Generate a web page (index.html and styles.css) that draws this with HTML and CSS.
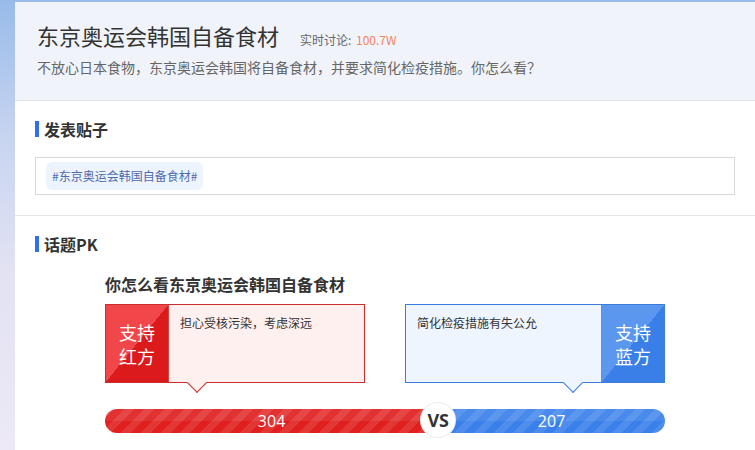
FILE: index.html
```html
<!DOCTYPE html>
<html lang="zh">
<head>
<meta charset="utf-8">
<link rel="stylesheet" href="styles.css">
</head>
<body>
<div class="page">
  <div class="container">
    <header class="topic-head">
      <div class="title-row">
        <h1 class="title">东京奥运会韩国自备食材</h1>
        <span class="live">实时讨论: <em class="live-num">100.7W</em></span>
      </div>
      <p class="subtitle">不放心日本食物，东京奥运会韩国将自备食材，并要求简化检疫措施。你怎么看？</p>
    </header>

    <section class="section">
      <h2 class="sec-title">发表贴子</h2>
      <div class="post-box">
        <span class="tag">#东京奥运会韩国自备食材#</span>
      </div>
    </section>

    <section class="section last">
      <h2 class="sec-title">话题PK</h2>
      <div class="pk">
        <h3 class="pk-q">你怎么看东京奥运会韩国自备食材</h3>
        <div class="pk-cards">
          <div class="card red">
            <div class="side"><span class="side-line">支持</span><span class="side-line">红方</span></div>
            <div class="opinion">担心受核污染，考虑深远</div>
            <span class="arrow"></span>
          </div>
          <div class="card blue">
            <div class="opinion">简化检疫措施有失公允</div>
            <div class="side"><span class="side-line">支持</span><span class="side-line">蓝方</span></div>
            <span class="arrow"></span>
          </div>
        </div>
        <div class="bar">
          <div class="seg seg-red" style="width:59.5%">304</div>
          <div class="seg seg-blue">207</div>
          <span class="vs" style="left:59.5%">VS</span>
        </div>
      </div>
    </section>
  </div>
</div>
</body>
</html>
```

FILE: styles.css
```css
html, body {
  margin: 0;
  padding: 0;
}
body {
  font-family: "Noto Sans CJK SC", "Noto Sans", sans-serif;
  background: linear-gradient(to bottom, #98bbea 0%, #c7d4f0 30%, #e2e2f3 60%, #ede9f6 100%);
  height: 450px;
  overflow: hidden;
}
.page {
  padding: 2px 0 0 15px;
}
.container {
  width: 740px;
  background: #fff;
  min-height: 448px;
}
.topic-head {
  background: #f0f4fa;
  padding: 16px 22px 22px;
  border-bottom: 1px solid #e3e6ec;
}
.title-row {
  display: flex;
  align-items: baseline;
  gap: 21px;
}
.title {
  margin: 0;
  font-size: 22px;
  line-height: 34px;
  font-weight: normal;
  color: #333;
}
.live {
  font-size: 12px;
  color: #666;
}
.live-num {
  font-style: normal;
  color: #f5845c;
  margin-left: 2px;
}
.subtitle {
  margin: 4px 0 0;
  font-size: 14px;
  line-height: 22px;
  color: #666;
}
.section {
  padding: 20px 20px 20px;
  border-bottom: 1px solid #e6e6e6;
}
.section.last {
  border-bottom: none;
}
.sec-title {
  margin: 0;
  font-size: 16px;
  line-height: 16px;
  font-weight: bold;
  color: #333;
  border-left: 4px solid #2f6ef0;
  padding-left: 5px;
}
.post-box {
  margin-top: 20px;
  border: 1px solid #d9d9d9;
  padding: 4px 10px;
  height: 28px;
}
.tag {
  display: inline-block;
  height: 28px;
  line-height: 28px;
  padding: 0 6px;
  background: #eef4fd;
  border-radius: 6px;
  font-size: 12px;
  color: #4d6bb0;
}
.pk {
  width: 560px;
  margin: 0 auto;
}
.pk-q {
  margin: 20px 0 8px;
  font-size: 16px;
  line-height: 24px;
  font-weight: bold;
  color: #333;
}
.pk-cards {
  display: flex;
  justify-content: space-between;
}
.card {
  position: relative;
  width: 258px;
  height: 77px;
  display: flex;
}
.card.red {
  border: 1px solid #cc2d2d;
  background: #fff0f0;
}
.card.blue {
  border: 1px solid #3b7ddb;
  background: #eef5fe;
}
.side {
  width: 62px;
  flex: none;
  display: flex;
  flex-direction: column;
  align-items: center;
  justify-content: center;
  gap: 0;
  color: #fff;
  font-size: 18px;
}
.side-line {
  display: block;
  height: 24px;
  line-height: 24px;
}
.red .side {
  background: linear-gradient(to bottom right, #f2474a 50%, #db1a1b 50%);
  border-right: 1px solid #d6403f;
}
.blue .side {
  background: linear-gradient(to bottom right, #5b96ef 50%, #3a7fe8 50%);
  border-left: 1px solid #5a92e8;
}
.opinion {
  flex: 1;
  padding: 9px 11px;
  font-size: 12px;
  line-height: 18px;
  color: #333;
}
.arrow {
  position: absolute;
  bottom: -8px;
  width: 13px;
  height: 13px;
  transform: rotate(45deg);
}
.red .arrow {
  left: 84px;
  background: #fff0f0;
  border-right: 1px solid #cc2d2d;
  border-bottom: 1px solid #cc2d2d;
}
.blue .arrow {
  right: 84px;
  background: #eef5fe;
  border-right: 1px solid #3b7ddb;
  border-bottom: 1px solid #3b7ddb;
}
.bar {
  position: relative;
  margin-top: 26px;
  height: 24px;
  display: flex;
  border-radius: 12px;
}
.seg {
  height: 24px;
  line-height: 24px;
  text-align: center;
  color: #fff;
  font-size: 16px;
  font-family: "Open Sans", "Noto Sans", sans-serif;
}
.seg-red {
  border-radius: 12px 0 0 12px;
  background:
    linear-gradient(to bottom, rgba(255,255,255,0.08) 50%, rgba(0,0,0,0) 50%),
    repeating-linear-gradient(135deg, rgba(255,255,255,0.1) 0 7px, rgba(255,255,255,0) 7px 14px),
    #e0201f;
}
.seg-blue {
  flex: 1;
  border-radius: 0 12px 12px 0;
  background:
    linear-gradient(to bottom, rgba(255,255,255,0.08) 50%, rgba(0,0,0,0) 50%),
    repeating-linear-gradient(135deg, rgba(255,255,255,0.1) 0 7px, rgba(255,255,255,0) 7px 14px),
    #3a80ea;
}
.vs {
  position: absolute;
  top: -6px;
  width: 34px;
  height: 34px;
  margin-left: -17px;
  border-radius: 50%;
  background: #fff;
  box-shadow: 0 0 0 1px #eeeeee;
  text-align: center;
  line-height: 34px;
  font-family: "Open Sans", "Noto Sans", sans-serif;
  font-weight: bold;
  font-size: 18px;
  color: #333;
}
```
